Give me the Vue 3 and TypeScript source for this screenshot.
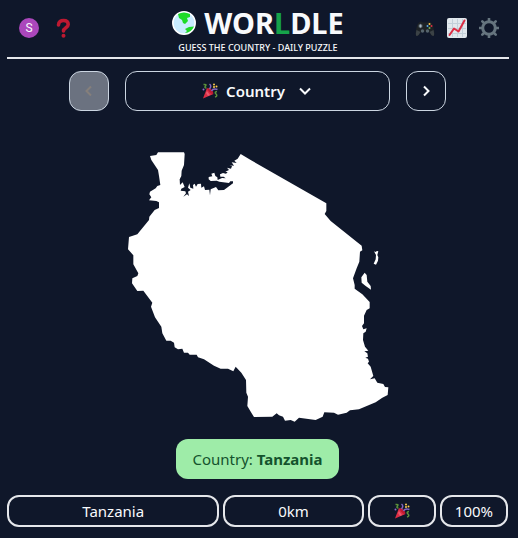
<script setup lang="ts">
import { ref } from 'vue'

interface Guess {
  name: string
  distance: string
  percent: string
}

const guesses = ref<Guess[]>([{ name: 'Tanzania', distance: '0km', percent: '100%' }])

const mainland =
  'M112 37 L190 37 192 42 190 75 183 92 182 108 177 118 178 135 186 127 192 141 182 146 180 152 194 154 196 160 188 170 199 163 205 168 202 155 210 150 202 143 206 130 209 143 218 146 217 135 222 131 226 140 231 132 241 131 242 143 250 139 253 150 266 149 268 166 270 148 286 141 293 151 310 150 337 130 337 124 329 124 325 129 296 125 288 122 270 123 264 118 264 111 275 109 272 101 281 98 284 108 290 112 291 120 304 114 315 115 309 110 299 110 298 103 307 99 316 101 321 97 314 95 325 90 319 83 331 86 334 78 326 76 340 77 333 67 348 69 341 62 351 56 360 42 390 60 617 190 617 213 612 222 630 243 723 317 725 331 718 335 716 365 708 385 697 415 702 435 702 446 725 463 747 486 747 505 738 510 730 527 730 550 724 558 728 568 738 565 735 575 728 580 727 600 733 620 743 632 731 634 740 640 742 650 734 653 742 656 745 665 741 670 750 680 758 708 748 718 762 715 770 728 788 732 793 741 803 742 801 765 785 773 765 787 715 808 688 811 678 818 652 824 640 818 611 817 606 830 585 840 535 833 522 845 510 840 493 842 487 830 475 826 468 820 455 830 400 831 392 818 380 798 382 770 377 758 376 720 362 698 345 680 338 694 322 686 300 686 280 677 250 658 232 652 228 644 207 644 202 638 190 638 185 626 172 628 162 622 160 608 150 602 137 602 125 580 122 560 103 532 91 500 95 488 68 452 50 453 34 430 35 415 50 408 53 400 38 373 38 346 22 328 25 291 50 283 85 240 86 230 102 210 115 204 115 187 107 183 85 181 92 172 86 163 88 155 105 145 110 138 119 135 115 108 112 90 92 60 88 48 107 45Z'
const islands =
  'M760 334 L764 336 769 333 773 334 770 345 773 352 772 362 766 374 759 371 765 358 766 345Z M732 398 L738 405 740 425 750 438 751 449 735 438 723 428 722 412Z'
</script>

<template>
  <div class="page">
    <svg class="defs" aria-hidden="true">
      <symbol id="party" viewBox="0 0 16 16">
        <path d="M5 5 11.500 11 1 15.500Z" fill="#dd2e44" />
        <path d="M5 8 8 12 6 13 4 10Z" fill="#ea596e" />
        <path d="M5.500 5Q7.500 4.500 10 7 12 10 11 11 9 11 7 8.500 5 6.500 5.500 5Z" fill="#be1931" />
        <path d="M1.500 1.500Q5 1 3.500 3 2 5 4.500 5M15 8.500Q12 9 14 11 16 13 13 14" fill="none" stroke="#5c913b" stroke-width="1.500" />
        <path d="M7.500 1Q10 3 7.500 6M9.500 8Q11 5 15.500 6.500" fill="none" stroke="#8066c0" stroke-width="1.500" />
        <circle cx="1.500" cy="6.500" r="1" fill="#9266cc" />
        <circle cx="12" cy="1.500" r="1" fill="#ffcc4d" />
        <circle cx="14.500" cy="3.500" r="1" fill="#ffcc4d" />
        <circle cx="12" cy="4" r="1" fill="#ffcc4d" />
      </symbol>
    </svg>

    <header class="header">
      <div class="side">
        <button class="avatar" type="button" aria-label="Profile">S</button>
        <button class="icon" type="button" aria-label="Help">
          <svg viewBox="0 0 20 20">
            <path d="M5.500 7C5.500 3.500 8 2.500 10.500 2.500 13.500 2.500 15.200 4.200 15.200 6.500 15.200 9.800 10.500 9.500 10.500 13" fill="none" stroke="#be1931" stroke-width="3.600" stroke-linecap="round" />
            <circle cx="10.500" cy="17.700" r="2" fill="#be1931" />
          </svg>
        </button>
      </div>
      <div class="brand">
        <h1>
          <svg class="globe" viewBox="0 0 24 24" aria-hidden="true">
            <circle cx="12" cy="12" r="11.200" fill="#c9ecff" stroke="#fff" stroke-width="1.500" />
            <path d="M6 3Q12 0 18 3L18 6 15 7 16 10 13 13 11 12 10 9 7 7Z" fill="#1edb28" />
            <path d="M22 15.500 17 16 13 18 15 20 13 22Q19 22 22 15.500Z" fill="#1edb28" />
          </svg>
          <span>WOR<span class="green">L</span>DLE</span>
        </h1>
        <p>GUESS THE COUNTRY - DAILY PUZZLE</p>
      </div>
      <div class="side">
        <button class="icon" type="button" aria-label="More games">
          <svg viewBox="0 0 20 20">
            <path d="M3.500 5Q6 2.500 8 4.500H12Q14 2.500 16.500 5 18 6 19 12 20 18 18 18 16 18 14 13.500H6Q4 18 2 18 0 18 1 12 2 6 3.500 5Z" fill="#1d2226" />
            <path d="M1.500 12Q0 18 2 18 4 17 5.500 14ZM18.500 12Q20 18 18 18 16 17 14.500 14Z" fill="#3b4246" />
            <circle cx="5.500" cy="8" r="2.200" fill="#4b565e" />
            <path d="M5.500 6.500V9.500M4 8H7" stroke="#aab8c2" stroke-width="1" />
            <circle cx="7.500" cy="13" r="1.700" fill="#56646d" />
            <circle cx="12.500" cy="13" r="1.700" fill="#56646d" />
            <circle cx="14.500" cy="6" r="1" fill="#ffcc4d" />
            <circle cx="12.500" cy="8" r="1" fill="#55acee" />
            <circle cx="16.500" cy="8" r="1" fill="#dd2e44" />
            <circle cx="14.500" cy="10" r="1" fill="#77b255" />
          </svg>
        </button>
        <button class="icon" type="button" aria-label="Statistics">
          <svg viewBox="0 0 20 20">
            <rect width="20" height="20" rx="2" fill="#e1e8ed" />
            <path d="M1 5.500H19M1 10.500H19M1 15.500H19M5.500 1V19M10.500 1V19M15.500 1V19" stroke="#c3d0d9" stroke-width="1" />
            <path d="M2.500 17 7 10.500 11.500 13.500 17.500 2.500" fill="none" stroke="#dd2e44" stroke-width="2" stroke-linecap="round" stroke-linejoin="round" />
          </svg>
        </button>
        <button class="icon" type="button" aria-label="Settings">
          <svg viewBox="0 0 20 20" fill="none" stroke="#66757f">
            <circle cx="10" cy="10" r="6.300" stroke-width="3" />
            <path d="M10 0.500V3M10 17V19.500M0.500 10H3M17 10H19.500M3.300 3.300 5 5M15 15 16.700 16.700M3.300 16.700 5 15M15 5 16.700 3.300" stroke-width="2.600" stroke-linecap="round" />
          </svg>
        </button>
      </div>
    </header>

    <main>
      <nav class="rounds" aria-label="Rounds">
        <button class="square" type="button" disabled aria-label="Previous round">
          <svg viewBox="0 0 16 16"><path d="M10 3.500 5.500 8 10 12.500" /></svg>
        </button>
        <button class="round" type="button">
          <svg class="party"><use href="#party" /></svg>
          <span>Country</span>
          <svg class="chevron" viewBox="0 0 16 16"><path d="M3 5.500 8 10.500 13 5.500" /></svg>
        </button>
        <button class="square" type="button" aria-label="Next round">
          <svg viewBox="0 0 16 16"><path d="M6 3.500 10.500 8 6 12.500" /></svg>
        </button>
      </nav>

      <svg class="map" viewBox="-8 0 840 870" role="img" aria-label="Country outline">
        <path :d="mainland" />
        <path :d="islands" />
      </svg>

      <p class="answer">Country: <strong>Tanzania</strong></p>

      <div v-for="guess in guesses" :key="guess.name" class="guess">
        <div class="name">{{ guess.name }}</div>
        <div class="distance">{{ guess.distance }}</div>
        <div><svg class="party"><use href="#party" /></svg></div>
        <div>{{ guess.percent }}</div>
      </div>
    </main>
  </div>
</template>

<style>
body {
  background: #0f172a;
}
</style>

<style scoped>
.page {
  padding: 0 9px 11px 7px;
  color: #f8fafc;
  font: 15px/24px "Noto Sans", "Open Sans", sans-serif;
}
.defs {
  display: none;
}
svg {
  display: block;
}
button {
  margin: 0;
  padding: 0;
  border: 0;
  background: none;
  color: inherit;
  font: inherit;
}
.header {
  display: flex;
  justify-content: space-between;
  height: 57px;
  border-bottom: 2px solid #e5e7eb;
}
.side {
  display: flex;
  flex: 1;
  gap: 12px;
  padding: 18px 10px 0 12px;
}
.side:first-child {
  gap: 14px;
}
.side:last-child {
  justify-content: flex-end;
}
.icon,
.avatar {
  width: 20px;
  height: 20px;
}
.avatar {
  border-radius: 50%;
  background: #ab47bc;
  font: 12px/20px Roboto, sans-serif;
}
.brand {
  text-align: center;
}
h1 {
  display: flex;
  align-items: center;
  justify-content: center;
  gap: 8px;
  margin: 5px 0 0;
  font-size: 29px;
  line-height: 36px;
  font-weight: 700;
}
.globe {
  width: 24px;
  height: 24px;
}
.green {
  color: #16a34a;
}
.brand p {
  margin: 0;
  font-size: 9px;
  line-height: 14px;
  font-weight: 500;
}
main {
  padding-right: 1px;
}
.rounds {
  display: flex;
  justify-content: center;
  gap: 16px;
  margin-top: 12px;
}
.rounds button {
  display: flex;
  align-items: center;
  justify-content: center;
  box-sizing: border-box;
  height: 40px;
  border: 1px solid #cbd5e1;
  border-radius: 12px;
}
.square {
  width: 40px;
}
.square:disabled {
  background: #6b7280;
  color: #857f7b;
}
.square svg,
.chevron {
  width: 16px;
  height: 16px;
  fill: none;
  stroke: currentColor;
  stroke-width: 2;
}
.round {
  width: 265px;
  gap: 8px;
  font-weight: 600;
}
.chevron {
  margin-left: 4px;
}
.party {
  width: 16px;
  height: 16px;
}
.map {
  width: 280px;
  height: 290px;
  margin: 29px auto 9px;
  fill: #fff;
}
.answer {
  width: fit-content;
  margin: 0 auto;
  padding: 8px 16px;
  border-radius: 12px;
  background: #9eeca8;
  color: #14532d;
}
.answer strong {
  font-weight: 700;
}
.guess {
  display: grid;
  grid-template-columns: repeat(7, 1fr);
  gap: 4px;
  margin-top: 16px;
}
.guess > div {
  display: flex;
  align-items: center;
  justify-content: center;
  box-sizing: border-box;
  height: 32px;
  border: 2px solid #e5e7eb;
  border-radius: 12px;
}
.guess .name {
  grid-column: span 3;
}
.guess .distance {
  grid-column: span 2;
}
</style>
